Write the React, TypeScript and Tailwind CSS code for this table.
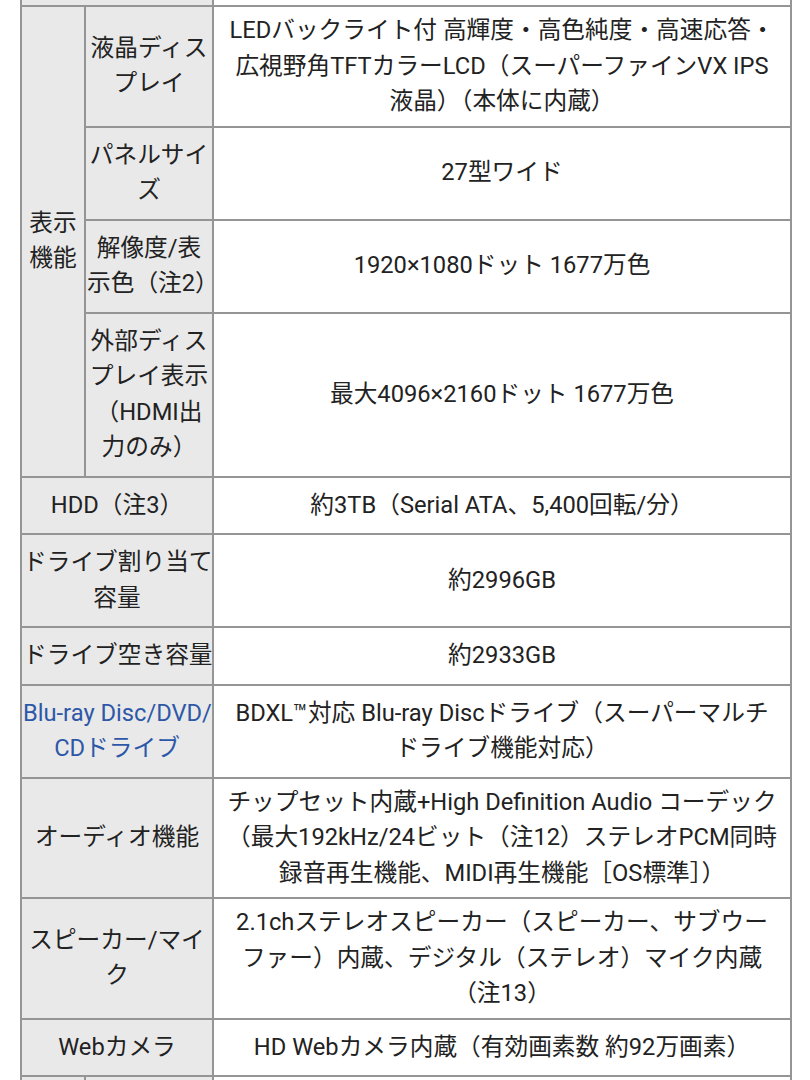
import * as React from 'react';

const th =
  'border-2 border-[#959595] bg-[#e9e9e9] px-[1px] py-[10px] text-center align-middle font-normal whitespace-nowrap';
const td =
  'border-2 border-[#959595] bg-white px-[4px] py-[6px] text-center align-middle whitespace-nowrap';

type Row = { head: React.ReactNode; body: React.ReactNode; link?: boolean };

const displayRows: Row[] = [
  {
    head: <>液晶ディス<br />プレイ</>,
    body: (
      <>
        LEDバックライト付 高輝度・高色純度・高速応答・<br />
        広視野角TFTカラーLCD（スーパーファインVX IPS<br />
        液晶）（本体に内蔵）
      </>
    ),
  },
  { head: <>パネルサイ<br />ズ</>, body: '27型ワイド' },
  { head: <>解像度/表<br />示色（注2）</>, body: '1920×1080ドット 1677万色' },
  {
    head: <>外部ディス<br />プレイ表示<br />（HDMI出<br />力のみ）</>,
    body: '最大4096×2160ドット 1677万色',
  },
];

const specRows: Row[] = [
  { head: 'HDD（注3）', body: '約3TB（Serial ATA、5,400回転/分）' },
  { head: <>ドライブ割り当て<br />容量</>, body: '約2996GB' },
  { head: 'ドライブ空き容量', body: '約2933GB' },
  {
    head: <>Blu-ray Disc/DVD/<br />CDドライブ</>,
    body: <>BDXL™対応 Blu-ray Discドライブ（スーパーマルチ<br />ドライブ機能対応）</>,
    link: true,
  },
  {
    head: 'オーディオ機能',
    body: (
      <>
        チップセット内蔵+High Definition Audio コーデック<br />
        （最大192kHz/24ビット（注12）ステレオPCM同時<br />
        録音再生機能、MIDI再生機能［OS標準］）
      </>
    ),
  },
  {
    head: <>スピーカー/マイ<br />ク</>,
    body: (
      <>
        2.1chステレオスピーカー（スピーカー、サブウー<br />
        ファー）内蔵、デジタル（ステレオ）マイク内蔵<br />
        （注13）
      </>
    ),
  },
  { head: 'Webカメラ', body: 'HD Webカメラ内蔵（有効画素数 約92万画素）' },
];

export default function App() {
  return (
    <div className="min-h-screen overflow-hidden bg-white font-[Roboto,'Noto_Sans_CJK_JP',sans-serif] text-[23.7px] leading-[35.5px] text-[#222]">
      <table className="ml-[20px] w-[770px] table-fixed border-collapse">
        <colgroup>
          <col className="w-[64px]" />
          <col className="w-[128px]" />
          <col className="w-[578px]" />
        </colgroup>
        <tbody>
          {/* tail of the previous row */}
          <tr className="h-[6px]">
            <th colSpan={2} className="border-2 border-t-0 border-[#959595] bg-[#e9e9e9] p-0" />
            <td className="border-2 border-t-0 border-[#959595] bg-white p-0" />
          </tr>

          {/* display group */}
          {displayRows.map((r, i) => (
            <tr key={i}>
              {i === 0 && (
                <th rowSpan={displayRows.length} className={th}>
                  表示<br />機能
                </th>
              )}
              <th className={th}>{r.head}</th>
              <td className={td}>{r.body}</td>
            </tr>
          ))}

          {specRows.map((r, i) => (
            <tr key={i}>
              <th colSpan={2} className={th}>
                {r.link ? <span className="text-[#2d58a8]">{r.head}</span> : r.head}
              </th>
              <td className={td}>{r.body}</td>
            </tr>
          ))}

          {/* start of the next group */}
          <tr className="h-[40px]">
            <th rowSpan={2} className={th} />
            <th className={th} />
            <td className={td} />
          </tr>
        </tbody>
      </table>
    </div>
  );
}
